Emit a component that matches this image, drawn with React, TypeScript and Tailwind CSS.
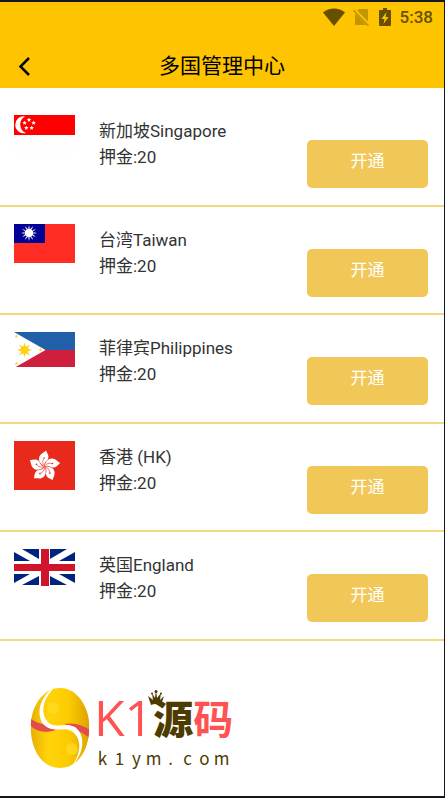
import type { ReactNode } from "react";

function star(cx: number, cy: number, outer: number, inner: number, points: number) {
  return Array.from({ length: points * 2 }, (_, i) => {
    const r = i % 2 === 0 ? outer : inner;
    const a = (Math.PI * i) / points - Math.PI / 2;
    return `${(cx + r * Math.cos(a)).toFixed(2)},${(cy + r * Math.sin(a)).toFixed(2)}`;
  }).join(" ");
}

function SingaporeFlag() {
  return (
    <svg viewBox="0 0 61 40" className="block w-full" role="img" aria-label="Singapore">
      <path fill="#fefefe" d="M0 0h61v40H0z" />
      <path fill="#ff0000" d="M0 0h61v20H0z" />
      <path fill="#fff" d="M11 1.4A8.5 8.5 0 1 0 12 18 9.2 9.2 0 0 1 11 1.4z" />
      {[[15, 4.8], [19.6, 8], [17.7, 13], [12.3, 13], [10.6, 8]].map(([x, y]) => (
        <polygon key={x} points={star(x, y, 2.3, 1.1, 5)} fill="#fff" />
      ))}
    </svg>
  );
}

function TaiwanFlag() {
  return (
    <svg viewBox="0 0 61 39" className="block w-full" role="img" aria-label="Taiwan">
      <path fill="#ff2d23" d="M0 0h61v39H0z" />
      <path fill="#000095" d="M0 0h31v19H0z" />
      <polygon points={star(15, 9, 8, 3.6, 12)} fill="#fff" />
      <circle cx="15" cy="9" r="4.8" fill="#000095" />
      <circle cx="15" cy="9" r="4.4" fill="#fff" />
    </svg>
  );
}

function PhilippinesFlag() {
  return (
    <svg viewBox="0 0 61 35" className="block w-full" role="img" aria-label="Philippines">
      <path fill="#225fa9" d="M0 0h61v18H0z" />
      <path fill="#ce203c" d="M0 18h61v17H0z" />
      <path fill="#fff" d="M0 0l31.500 18L0 36z" />
      <polygon points={star(10.5, 18, 8, 3, 8)} fill="#fcd116" />
      <circle cx="10.500" cy="18" r="4" fill="#fcd116" />
      {[[2.4, 4.3], [2.5, 31.5], [26.5, 18]].map(([x, y]) => (
        <polygon key={y} points={star(x, y, 2, 0.8, 5)} fill="#fcd116" />
      ))}
    </svg>
  );
}

function HongKongFlag() {
  return (
    <svg viewBox="0 0 61 49" className="block w-full" role="img" aria-label="Hong Kong">
      <path fill="#e72a1c" d="M0 0h61v49H0z" />
      <g transform="translate(30.500 25.500)">
        {[0, 72, 144, 216, 288].map((angle) => (
          <g key={angle} transform={`rotate(${angle})`}>
            <path fill="#fff" d="M0 0C-5-3-7-7-4.500-11-3-13.500 0-14 1.500-16 2.500-13 5-11 3.500-7.500 2-5-1-4 0 0z" />
            <path fill="none" stroke="#e72a1c" strokeWidth=".6" d="M0 0C-2.500-3-2-6-.5-8" />
            <circle cx="-.5" cy="-8.500" r=".8" fill="#e72a1c" />
          </g>
        ))}
      </g>
    </svg>
  );
}

function EnglandFlag() {
  return (
    <svg viewBox="0 0 61 37" className="block w-full" role="img" aria-label="England">
      <path fill="#fff" d="M0 0h61v37H0z" />
      <path
        fill="#00247d"
        d="M8 0h17v10zM36 0h17L36 10zM0 3l16 9H0zM61 3v9H45zM0 25h16L0 34zM45 25h16v9zM25 27v9H8zM36 27l17 9H36z"
      />
      <path fill="#cf142b" d="M27 0h8v37h-8zM0 15h61v7H0z" />
    </svg>
  );
}

const countries: { name: string; flag: ReactNode }[] = [
  { name: "新加坡Singapore", flag: <SingaporeFlag /> },
  { name: "台湾Taiwan", flag: <TaiwanFlag /> },
  { name: "菲律宾Philippines", flag: <PhilippinesFlag /> },
  { name: "香港 (HK)", flag: <HongKongFlag /> },
  { name: "英国England", flag: <EnglandFlag /> },
];

function StatusBar() {
  return (
    <div className="flex h-[30px] items-center justify-end pr-[11px] text-[#665000]">
      <svg viewBox="0 0 22 18" className="h-[18px] w-[22px]" fill="currentColor" aria-hidden="true">
        <path d="M0 4.500C6-.8 16-.8 22 4.500L11 18z" />
      </svg>
      <svg viewBox="0 0 17 18" className="ml-2 h-[18px] w-[17px]" aria-hidden="true">
        <path fill="#c39600" d="M6 1h8q1 0 1 1v14q0 1-1 1H3q-1 0-1-1V5z" />
        <path stroke="#ffc400" strokeWidth="3.500" d="M0 1l17 17" />
        <path stroke="#c39600" strokeWidth="1.600" d="M.5 2.300l15 15.500" />
      </svg>
      <svg viewBox="0 0 12 18" className="ml-[9px] h-[18px] w-3" aria-hidden="true">
        <path fill="currentColor" d="M4 0h4v2h3q1 0 1 1v14q0 1-1 1H1q-1 0-1-1V3q0-1 1-1h3z" />
        <path fill="#ffc400" d="M7.500 4L2.500 11H5.500L4.500 16 9.500 9H6.500z" />
      </svg>
      <span className="ml-[9px] text-[17px] leading-5 font-medium">5:38</span>
    </div>
  );
}

function Logo() {
  return (
    <footer className="flex items-start gap-2 px-[30px] pt-[47px] pb-6">
      <svg viewBox="45 54 180 240" className="h-20 w-[60px] shrink-0" aria-hidden="true">
        <defs>
          <linearGradient id="gold" x1="0" y1="0" x2="1" y2="0">
            <stop offset="0" stopColor="#e6ad00" />
            <stop offset=".3" stopColor="#ffd30b" />
            <stop offset=".65" stopColor="#fccb00" />
            <stop offset="1" stopColor="#dca000" />
          </linearGradient>
          <clipPath id="egg">
            <path d="M135 54C187 54 223 112 223 170 223 240 188 294 135 294 80 294 47 238 47 170 47 112 82 54 135 54z" />
          </clipPath>
        </defs>
        <g clipPath="url(#egg)">
          <path fill="url(#gold)" d="M45 54h180v240H45z" />
          <circle cx="115" cy="115" r="18" fill="#ffdb25" opacity=".7" />
          <circle cx="170" cy="237" r="18" fill="#ffdb25" opacity=".7" />
          <path fill="#e44b4e" d="M45 144C64 162 92 160 122 180 92 191 60 184 45 165z" />
          <path fill="#e44b4e" d="M148 162C178 156 207 167 225 180V205C205 188 185 182 148 162z" />
          <path
            fill="#fff"
            d="M108 58C72 90 62 138 88 166 116 190 144 170 167 182 202 200 200 250 170 288 210 248 211 195 181 172 155 156 128 174 106 162 76 142 78 94 114 58z"
          />
        </g>
      </svg>
      <div className="pt-1">
        <p className="relative -ml-1 flex h-[50px] items-center text-[#ff5252]">
          <span className="font-['Open_Sans',sans-serif] text-[50px] leading-[40px] whitespace-nowrap">K1</span>
          <span className="font-['Noto_Sans_CJK_SC',sans-serif] text-[40px] leading-[50px] font-black text-[#4d3b00]">
            源
          </span>
          <span className="font-['Noto_Sans_CJK_SC',sans-serif] text-[40px] leading-[50px] font-bold">码</span>
          <svg
            viewBox="0 0 16 16"
            className="absolute -top-[2px] left-[54px] h-4 w-4"
            fill="#4d3b00"
            aria-hidden="true"
          >
            <path d="M3 15L0 6l5 4L4 3l3 5 1-8 1 8 4-5-1 7 4-4-3 9q-5-2-10 0z" />
            <circle cx="8" cy="1.500" r="1.500" />
            <circle cx="4" cy="3.500" r="1" />
            <circle cx="13" cy="3.500" r="1" />
          </svg>
        </p>
        <p className="-ml-1 grid w-[136px] grid-cols-8 pt-1 text-center font-['Noto_Sans_CJK_SC',sans-serif] text-[17px] leading-6 text-[#4d3b00]">
          {Array.from("k1ym.com").map((letter, index) => (
            <span key={index}>{letter}</span>
          ))}
        </p>
      </div>
    </footer>
  );
}

export default function App() {
  return (
    <div className="min-h-screen border-t-2 border-r border-b-2 border-[#14171f] bg-white font-[Roboto,'Noto_Sans_CJK_SC',sans-serif] text-[#333333]">
      <header className="bg-[#ffc400]">
        <StatusBar />
        <div className="grid h-14 grid-cols-[48px_1fr_48px] items-center pt-2 text-black">
          <button type="button" aria-label="返回" className="flex h-10 items-center pt-1 pl-[18px]">
            <svg viewBox="0 0 12 20" className="h-5 w-3" fill="none" stroke="currentColor" strokeWidth="2.500" aria-hidden="true">
              <path d="M11 2L2.500 10.500 11 19" />
            </svg>
          </button>
          <h1 className="pt-1 text-center text-[21px] leading-8">多国管理中心</h1>
        </div>
      </header>
      <main>
        <ul className="pt-[10px]">
          {countries.map(({ name, flag }) => (
            <li
              key={name}
              className="flex items-start border-b-2 border-[#f6d87c] pr-4 pl-[14px] odd:h-[109px] even:h-[108px]"
            >
              <div className="w-[61px] shrink-0 pt-[17px]">{flag}</div>
              <div className="ml-6 flex-1 pt-5 text-[17px] leading-[26px]">
                <h2>{name}</h2>
                <p>押金:20</p>
              </div>
              <button
                type="button"
                className="mt-[42px] h-12 w-[121px] rounded-[5px] bg-[#f1c757] pb-1 text-[17px] text-white"
              >
                开通
              </button>
            </li>
          ))}
        </ul>
      </main>
      <Logo />
    </div>
  );
}
